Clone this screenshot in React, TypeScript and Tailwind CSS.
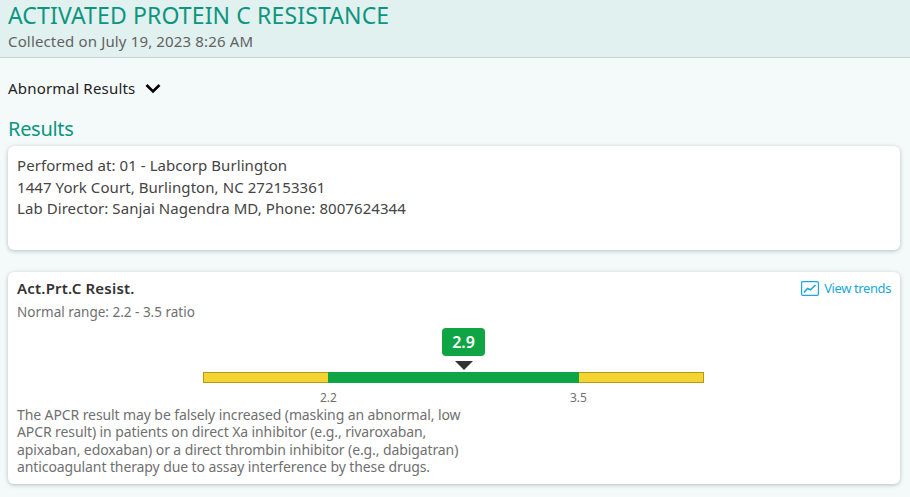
import React from 'react';

function TrendIcon() {
  return (
    <svg width="18" height="15" viewBox="0 0 18 15" fill="none" className="shrink-0">
      <rect x="0.6" y="0.6" width="16.8" height="13.8" rx="1.2" stroke="#1ba7dc" strokeWidth="1.2" />
      <path d="M3 11.5 L6.5 7.5 L9.5 8.8 L14.5 4" stroke="#1ba7dc" strokeWidth="1.6" />
    </svg>
  );
}

function RangeBar() {
  return (
    <div className="relative w-[501px] h-[78px] ml-[186px]">
      <div className="absolute left-[239px] top-0 w-[43px] h-[28px] rounded-[4px] bg-[#10a544] text-white text-[16px] leading-[28px] font-semibold text-center">
        2.9
      </div>
      <div className="absolute left-[252px] top-[33px] w-0 h-0 border-x-[9px] border-x-transparent border-t-[9px] border-t-[#333333]" />
      <div className="absolute left-0 top-[44px] w-full h-[11px] flex">
        <div className="w-[125px] bg-[#f3d433] border border-r-0 border-[#b59a10]" />
        <div className="w-[251px] bg-[#10a544]" />
        <div className="flex-1 bg-[#f3d433] border border-l-0 border-[#b59a10]" />
      </div>
      <span className="absolute left-[117px] top-[61px] text-[12px] leading-[17px] text-[#707070]">2.2</span>
      <span className="absolute left-[367px] top-[61px] text-[12px] leading-[17px] text-[#707070]">3.5</span>
    </div>
  );
}

export default function App() {
  return (
    <div className="w-[910px] h-[497px] overflow-hidden bg-[#f4fafa] font-['Noto_Sans',sans-serif]">
      <header className="h-[58px] px-2 bg-[#e1f1ef] border-b border-[#c8cfce]">
        <h1 className="text-[23px] leading-[30px] tracking-[0.13px] text-[#0d957f]">ACTIVATED PROTEIN C RESISTANCE</h1>
        <p className="text-[15px] leading-[23px] tracking-[0.15px] text-[#626262]">Collected on July 19, 2023 8:26 AM</p>
      </header>

      <div className="pl-2 pr-[10px]">
        <div className="flex items-center gap-[10px] mt-[20px] h-[20px]">
          <span className="text-[15px] tracking-[0.2px] text-[#222222]">Abnormal Results</span>
          <svg width="16" height="11" viewBox="0 0 16 11" fill="none">
            <path d="M1.5 2 L8 8.5 L14.5 2" stroke="#000000" strokeWidth="2.6" />
          </svg>
        </div>

        <h2 className="mt-[17px] text-[20px] leading-[28px] tracking-[-0.3px] text-[#0d957f]">Results</h2>

        <section className="mt-[3px] h-[104px] rounded-[6px] bg-white px-[9px] py-[9px] shadow-[0_1px_4px_rgba(0,0,0,0.25)] text-[15px] leading-[21.7px] tracking-[0.07px] text-[#444444]">
          <p>Performed at: 01 - Labcorp Burlington</p>
          <p>1447 York Court, Burlington, NC 272153361</p>
          <p>Lab Director: Sanjai Nagendra MD, Phone: 8007624344</p>
        </section>

        <section className="mt-[22px] h-[212px] rounded-[6px] bg-white px-[9px] pt-[6px] shadow-[0_1px_4px_rgba(0,0,0,0.25)]">
          <div className="flex items-start justify-between">
            <h3 className="text-[15px] leading-[20px] tracking-[0.2px] font-semibold text-[#333333]">Act.Prt.C Resist.</h3>
            <a className="flex items-center gap-[5px] text-[13px] leading-[20px] tracking-[-0.4px] text-[#1ba7dc]">
              <TrendIcon />
              View trends
            </a>
          </div>
          <p className="mt-[4px] text-[13.5px] leading-[20px] text-[#707070]">Normal range: 2.2 - 3.5 ratio</p>
          <div className="mt-[6px]">
            <RangeBar />
          </div>
          <p className="w-[455px] text-[14px] leading-[17.3px] tracking-[-0.1px] text-[#707070]">
            The APCR result may be falsely increased (masking an abnormal, low APCR result) in patients on direct Xa inhibitor (e.g., rivaroxaban, apixaban, edoxaban) or a direct thrombin inhibitor (e.g., dabigatran) anticoagulant therapy due to assay interference by these drugs.
          </p>
        </section>
      </div>
    </div>
  );
}
